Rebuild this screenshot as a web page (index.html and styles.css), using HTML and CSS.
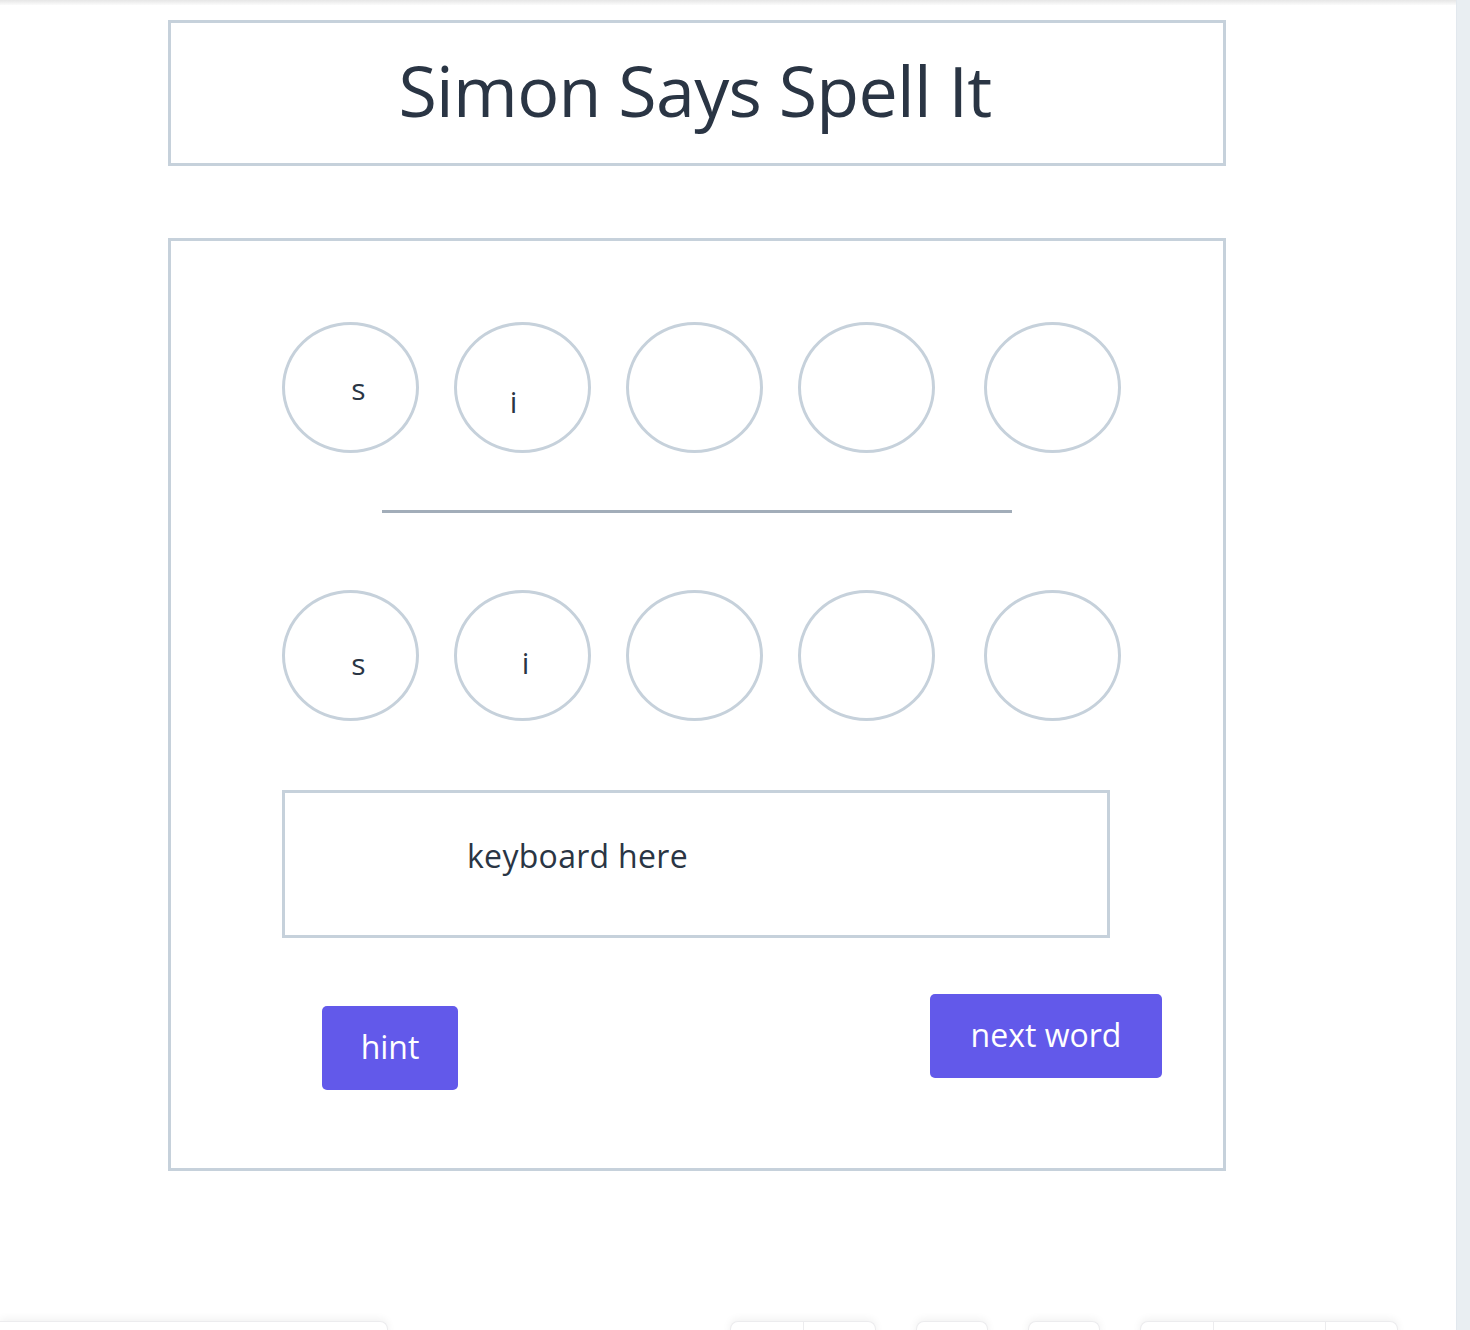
FILE: index.html
```html
<!DOCTYPE html>
<html lang="en">
<head>
<meta charset="utf-8">
<title>Simon Says Spell It</title>
<link rel="stylesheet" href="styles.css">
</head>
<body>
<div class="page">
  <div class="stage">
    <div class="top-shadow"></div>
    <div class="title-box">
      <h1 class="title">Simon Says Spell It</h1>
    </div>
    <div class="game-box">
      <div class="circles circles-top">
        <div class="circle"><span class="letter l-s1">s</span></div>
        <div class="circle"><span class="letter l-i1">i</span></div>
        <div class="circle"></div>
        <div class="circle"></div>
        <div class="circle circle-last"></div>
      </div>
      <div class="divider"></div>
      <div class="circles circles-bottom">
        <div class="circle"><span class="letter l-s2">s</span></div>
        <div class="circle"><span class="letter l-i2">i</span></div>
        <div class="circle"></div>
        <div class="circle"></div>
        <div class="circle circle-last"></div>
      </div>
      <div class="keyboard">keyboard here</div>
      <div class="buttons">
        <button class="btn btn-hint">hint</button>
        <button class="btn btn-next">next word</button>
      </div>
    </div>
    <div class="bottom-toolbar">
      <div class="tb tb-left"></div>
      <div class="tb tb-group tb-g1"><span class="seg seg-a"></span><span class="seg seg-b"></span></div>
      <div class="tb tb-group tb-g2"></div>
      <div class="tb tb-group tb-g3"></div>
      <div class="tb tb-group tb-g4"><span class="seg seg-c"></span><span class="seg seg-d"></span><span class="seg seg-e"></span></div>
    </div>
  </div>
  <div class="side"></div>
</div>
</body>
</html>
```
FILE: styles.css
```css
* { box-sizing: border-box; }
html, body { margin: 0; padding: 0; background: #ffffff; }
body {
  font-family: "Open Sans", "Noto Sans", sans-serif;
  color: #2d3748;
}
.page {
  display: flex;
  width: 1470px;
  height: 1330px;
  overflow: hidden;
}
.stage {
  position: relative;
  width: 1456px;
  height: 1330px;
  background: #ffffff;
}
.top-shadow {
  height: 5px;
  background: linear-gradient(#e6e6e6, #fbfbfb);
}
.side {
  width: 14px;
  height: 1330px;
  background: #e9eef2;
  border-left: 1px solid #e2e8ee;
}
.title-box {
  margin: 15px 0 0 168px;
  width: 1058px;
  height: 146px;
  border: 3px solid #c6d1db;
  display: flex;
  align-items: center;
  justify-content: center;
}
.title {
  margin: 0;
  font-size: 70px;
  font-weight: 500;
  letter-spacing: -0.7px;
  line-height: 1;
  padding: 0 4px 6px 0;
  color: #2a3544;
}
.game-box {
  margin: 72px 0 0 168px;
  width: 1058px;
  height: 933px;
  border: 3px solid #c6d1db;
  padding: 81px 0 0 111px;
}
.circles {
  display: flex;
  gap: 35px;
}
.circle {
  width: 137px;
  height: 131px;
  border: 3px solid #c6d1db;
  border-radius: 50%;
  display: flex;
  align-items: center;
  justify-content: center;
}
.circle-last { margin-left: 14px; }
.letter {
  font-size: 30px;
  font-weight: 500;
  line-height: 1;
  color: #2a3544;
}
.l-s1 { margin: 0 0 -3px 16px; }
.l-i1 { margin: 28px 18px 0 0; }
.l-s2 { margin: 16px 0 0 16px; }
.l-i2 { margin: 14px 0 0 6px; }
.divider {
  margin: 57px 0 0 100px;
  width: 630px;
  height: 3px;
  background: #a2adb9;
}
.circles-bottom { margin-top: 77px; }
.keyboard {
  margin: 69px 0 0 0;
  width: 828px;
  height: 148px;
  border: 3px solid #c6d1db;
  display: flex;
  align-items: center;
  padding: 0 0 18px 182px;
  font-size: 32px;
  font-weight: 500;
  letter-spacing: 0.3px;
  color: #2a3544;
}
.buttons {
  display: flex;
  justify-content: space-between;
  align-items: flex-start;
  margin: 56px 0 0 40px;
  width: 840px;
}
.btn {
  border: none;
  background: #6259ea;
  color: #ffffff;
  font-family: "Open Sans", "Noto Sans", sans-serif;
  font-size: 32px;
  font-weight: 500;
  height: 84px;
  border-radius: 5px;
  padding: 0 0 4px;
  cursor: pointer;
}
.btn-hint { width: 136px; margin-top: 12px; }
.btn-next { width: 232px; }
.bottom-toolbar {
  position: absolute;
  left: 0;
  top: 1321px;
  width: 1456px;
  height: 40px;
  display: flex;
}
.tb {
  height: 40px;
  background: #ffffff;
  border-top: 1px solid #ececee;
  box-shadow: 0 -2px 8px rgba(0, 0, 0, 0.06);
}
.tb-left {
  width: 388px;
  border-radius: 0 8px 0 0;
  border-right: 1px solid #ececee;
}
.tb-group {
  border-radius: 8px 8px 0 0;
  border-left: 1px solid #ececee;
  border-right: 1px solid #ececee;
  display: flex;
}
.tb-g1 { margin-left: 342px; width: 146px; }
.tb-g2 { margin-left: 40px; width: 72px; }
.tb-g3 { margin-left: 40px; width: 72px; }
.tb-g4 { margin-left: 40px; width: 258px; }
.seg { height: 40px; border-right: 1px solid #ececee; }
.seg-a { width: 73px; }
.seg-b { flex: 1; border-right: none; }
.seg-c { width: 73px; }
.seg-d { width: 112px; }
.seg-e { flex: 1; border-right: none; }
```
